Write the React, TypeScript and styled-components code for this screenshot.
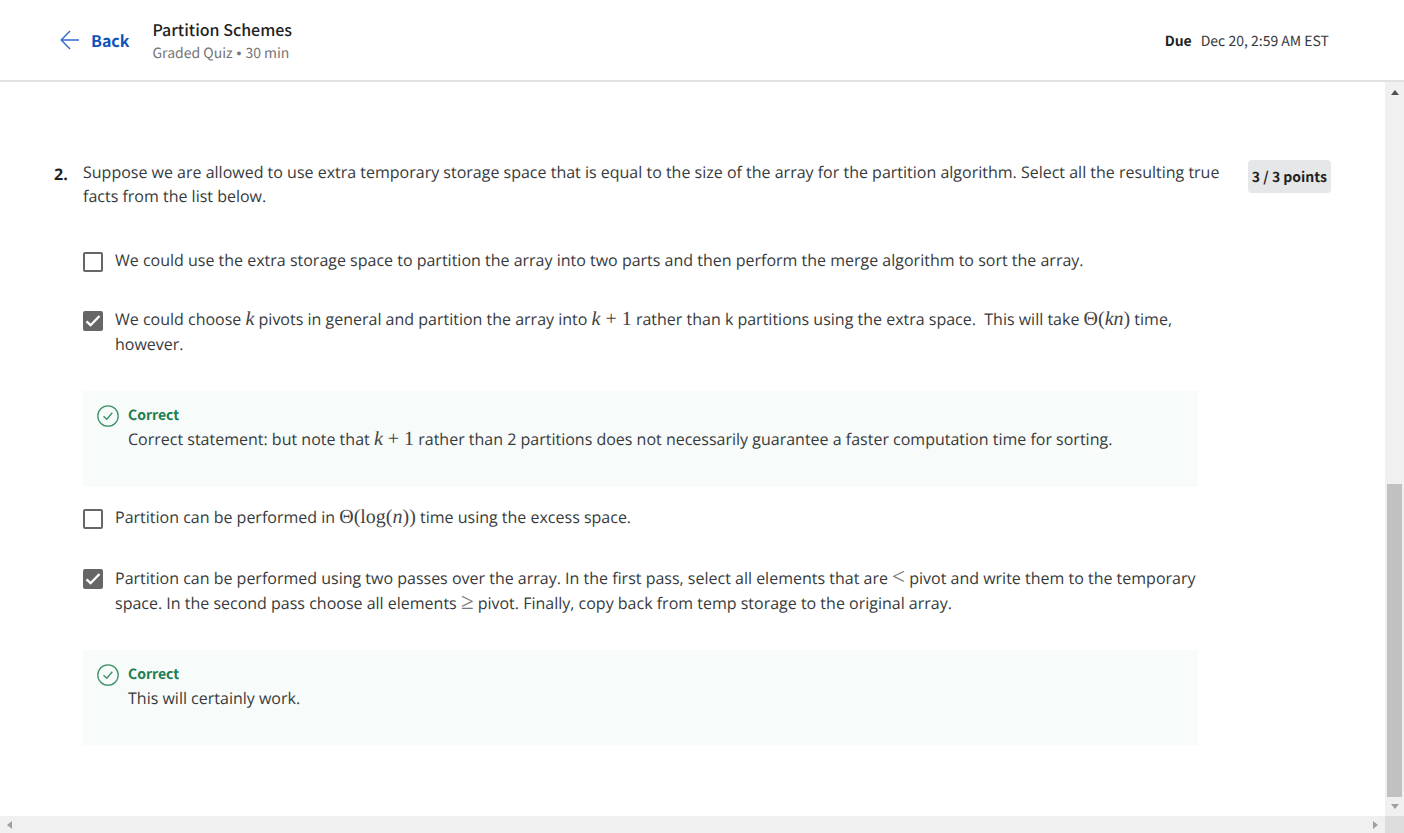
import React, { useId, useState } from "react";
import styled, { createGlobalStyle } from "styled-components";

const GlobalStyle = createGlobalStyle`
  *, *::before, *::after { box-sizing: border-box; }
  body { margin: 0; background: #fff; color: #373a3c; font-family: "Open Sans", sans-serif; font-size: 16px; font-weight: 400; line-height: 24px; text-rendering: geometricPrecision; }
  h1, h2, h3, p { margin: 0; font-size: inherit; }
`;

const heading = `font-family: "Noto Sans CJK SC", sans-serif;`;

const Page = styled.div`
  display: flex;
  flex-direction: column;
  height: 100vh;
  overflow: hidden;
`;

const Header = styled.header`
  ${heading}
  display: flex;
  align-items: center;
  flex: none;
  height: 82px;
  padding: 2px 75px 0 60px;
  border-bottom: 2px solid #e1e1e1;
`;

const BackLink = styled.a`
  display: flex;
  align-items: center;
  gap: 11px;
  margin-right: 23px;
  padding-bottom: 2px;
  color: #0f52ba;
  font-weight: 700;
  text-decoration: none;
`;

const Titles = styled.div`
  flex: 1;
`;

const Title = styled.h1`
  color: #1f1f1f;
  font-weight: 500;
`;

const Subtitle = styled.p`
  color: #757575;
  font-family: "Liberation Sans", sans-serif;
  font-size: 14px;

  span { ${heading} }
`;

const DueDate = styled.p`
  display: flex;
  gap: 9px;
  color: #373a3c;
  font-size: 14px;
`;

const Strong = styled.strong`
  color: #1f1f1f;
  font-weight: 700;
`;

const Viewport = styled.div`
  display: grid;
  grid-template-columns: minmax(0, 1fr) 19px;
  grid-template-rows: minmax(0, 1fr) 17px;
  flex: 1;
  min-height: 0;
`;

const Content = styled.main`
  overflow: hidden;
  padding: 78px 54px 0 54px;
`;

const Question = styled.section`
  display: grid;
  grid-template-columns: 29px minmax(0, 1fr) auto;
`;

const QuestionNumber = styled.span`
  color: #1f1f1f;
  font-weight: 700;
  padding-top: 2px;
`;

const Prompt = styled.p`
  margin: 0 -24px 40px 0;
`;

const Points = styled.div`
  ${heading}
  align-self: start;
  margin-left: 50px;
  padding: 5px 4px 4px;
  border-radius: 4px;
  background: #e5e7e8;
  color: #1f1f1f;
  font-size: 14px;
  font-weight: 700;
`;

const OptionRow = styled.div`
  display: flex;
  gap: 12px;
  margin-bottom: 35px;
`;

const CheckCell = styled.span`
  display: grid;
  flex: none;
  width: 20px;
  height: 20px;
  margin-top: 4px;

  > * { grid-area: 1 / 1; }
  svg { pointer-events: none; }
`;

const CheckInput = styled.input`
  appearance: none;
  width: 20px;
  height: 20px;
  margin: 0;
  border: 2px solid #666;
  border-radius: 2px;
  background: #fff;

  &:checked { background: #666; }
`;

const Feedback = styled.aside`
  display: flex;
  gap: 9px;
  margin-bottom: 18px;
  padding: 12px 14px 35px;
  background: #f7fbf9;

  > svg { flex: none; margin-top: 2px; }
`;

const FeedbackTitle = styled.h3`
  ${heading}
  color: #1f7d51;
  font-size: 14px;
  font-weight: 700;
`;

const MathText = styled.span`
  display: inline-block;
  color: #444;
  font-family: "Liberation Serif", serif;
  font-size: 20px;
  line-height: 25px;
  white-space: nowrap;
`;

const Relation = styled.span`
  color: #777;
  font-family: "Liberation Serif", serif;
  font-size: 23px;
  line-height: 1;
`;

const VerticalBar = styled.div`
  display: flex;
  flex-direction: column;
  align-items: center;
  background: #f0f0f0;
  padding: 8px 0 7px;
`;

const Thumb = styled.div`
  width: 15px;
  height: 43.5%;
  margin: auto 0 7px;
  background: #c1c1c1;
`;

const HorizontalBar = styled.div`
  display: flex;
  align-items: center;
  justify-content: space-between;
  padding: 0 7px;
  background: #f0f0f0;
`;

const Corner = styled.div`
  background: #dcdcdc;
`;

const arrowPaths = {
  up: "M0 5 4 0 8 5Z",
  down: "M0 0 4 5 8 0Z",
  left: "M5 0 0 4 5 8Z",
  right: "M0 0 5 4 0 8Z",
};

function ScrollArrow({ direction, color }: { direction: keyof typeof arrowPaths; color: string }) {
  const vertical = direction === "up" || direction === "down";
  return (
    <svg width={vertical ? 8 : 5} height={vertical ? 5 : 8} aria-hidden="true">
      <path d={arrowPaths[direction]} fill={color} />
    </svg>
  );
}

function CorrectIcon() {
  return (
    <svg width="22" height="22" viewBox="0 0 22 22" fill="none" stroke="#3d9169" aria-hidden="true">
      <circle cx="11" cy="11" r="10.2" strokeWidth="1.3" />
      <path d="M6.5 11.2 9.8 14.3 15.3 7.8" strokeWidth="1.4" />
    </svg>
  );
}

function Option({ defaultChecked = false, children }: { defaultChecked?: boolean; children: React.ReactNode }) {
  const id = useId();
  const [checked, setChecked] = useState(defaultChecked);
  return (
    <OptionRow>
      <CheckCell>
        <CheckInput id={id} type="checkbox" checked={checked} onChange={(e) => setChecked(e.target.checked)} />
        {checked && (
          <svg width="20" height="20" viewBox="0 0 20 20" fill="none" aria-hidden="true">
            <path d="M3.5 10.3 7.6 14.2 16.5 5" stroke="#fff" strokeWidth="2.3" />
          </svg>
        )}
      </CheckCell>
      <label htmlFor={id}>{children}</label>
    </OptionRow>
  );
}

function CorrectFeedback({ children }: { children: React.ReactNode }) {
  return (
    <Feedback>
      <CorrectIcon />
      <div>
        <FeedbackTitle>Correct</FeedbackTitle>
        <p>{children}</p>
      </div>
    </Feedback>
  );
}

export default function App() {
  return (
    <Page>
      <GlobalStyle />
      <Header>
        <BackLink href="#back">
          <svg width="20" height="20" viewBox="0 0 20 20" fill="none" stroke="#2f6bc6" strokeWidth="1.4" aria-hidden="true">
            <path d="M19 10H1.5M10 1 1.2 10 10 19" />
          </svg>
          Back
        </BackLink>
        <Titles>
          <Title>Partition Schemes</Title>
          <Subtitle>
            <span>Graded Quiz</span> • <span>30 min</span>
          </Subtitle>
        </Titles>
        <DueDate>
          <Strong>Due</Strong>
          <span>Dec 20, 2:59 AM EST</span>
        </DueDate>
      </Header>
      <Viewport>
        <Content>
          <Question>
            <QuestionNumber>2.</QuestionNumber>
            <div>
              <Prompt>
                Suppose we are allowed to use extra temporary storage space that is equal to the size of the array for the
                partition algorithm. Select all the resulting true facts from the list below.
              </Prompt>
              <Option>
                We could use the extra storage space to partition the array into two parts and then perform the merge
                algorithm to sort the array.
              </Option>
              <Option defaultChecked>
                We could choose <MathText><i>k</i></MathText> pivots in general and partition the array into{" "}
                <MathText><i>k</i> + 1</MathText> rather than k partitions using the extra space.&nbsp; This will take{" "}
                <MathText>Θ(<i>kn</i>)</MathText> time, however.
              </Option>
              <CorrectFeedback>
                Correct statement: but note that <MathText><i>k</i> + 1</MathText> rather than 2 partitions does not
                necessarily guarantee a faster computation time for sorting.
              </CorrectFeedback>
              <Option>
                Partition can be performed in <MathText>Θ(log(<i>n</i>))</MathText> time using the excess space.
              </Option>
              <Option defaultChecked>
                Partition can be performed using two passes over the array. In the first pass, select all elements that
                are <Relation>&lt;</Relation> pivot and write them to the temporary space. In the second pass choose all
                elements <Relation>≥</Relation> pivot. Finally, copy back from temp storage to the original array.
              </Option>
              <CorrectFeedback>This will certainly work.</CorrectFeedback>
            </div>
            <Points>3 / 3 points</Points>
          </Question>
        </Content>
        <VerticalBar>
          <ScrollArrow direction="up" color="#505050" />
          <Thumb />
          <ScrollArrow direction="down" color="#a0a0a0" />
        </VerticalBar>
        <HorizontalBar>
          <ScrollArrow direction="left" color="#a0a0a0" />
          <ScrollArrow direction="right" color="#a0a0a0" />
        </HorizontalBar>
        <Corner />
      </Viewport>
    </Page>
  );
}
